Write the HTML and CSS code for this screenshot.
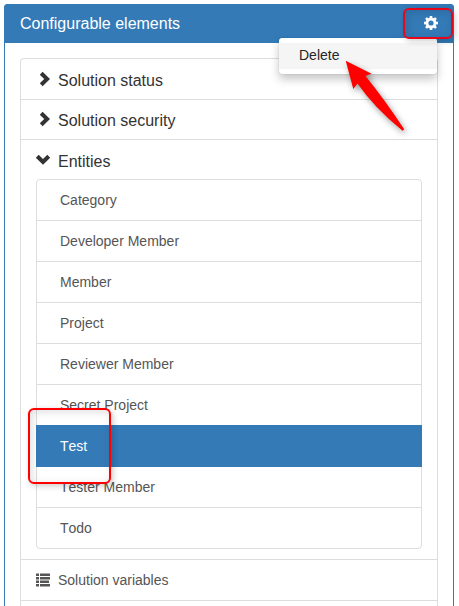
FILE: index.html
```html
<!DOCTYPE html>
<html lang="en">
<head>
<meta charset="utf-8">
<title>Configurable elements</title>
<link rel="stylesheet" href="styles.css">
</head>
<body>
<section class="panel">
  <header class="panel-head">
    <h1 class="panel-title">Configurable elements</h1>
    <svg class="gear" viewBox="0 0 14 14"><path fill="currentColor" fill-rule="evenodd" d="M5.8 0h2.4l.4 1.9 1 .4 1.6-1.1 1.6 1.6-1.1 1.6.4 1 1.9.4v2.4l-1.9.4-.4 1 1.1 1.6-1.6 1.6-1.6-1.1-1 .4-.4 1.9H5.800l-.4-1.9-1-.4-1.600 1.100-1.600-1.600 1.100-1.600-.4-1L0 8.200V5.800l1.900-.4.4-1-1.100-1.600 1.600-1.600 1.600 1.100 1-.4zM7 4.400a2.600 2.600 0 1 0 0 5.200 2.600 2.600 0 0 0 0-5.200z"/></svg>
    <div class="menu"><a class="menu-item">Delete</a></div>
    <div class="mark mark-gear"></div>
  </header>
  <div class="panel-body">
    <ul class="groups">
      <li class="group">
        <svg class="icon" viewBox="0 0 14 14"><path fill="currentColor" d="M3.800 2.700 6.600-.2 14 7l-7.400 7.200L3.800 11.300 8.200 7z"/></svg>
        <span>Solution status</span>
      </li>
      <li class="group">
        <svg class="icon" viewBox="0 0 14 14"><path fill="currentColor" d="M3.800 2.700 6.600-.2 14 7l-7.400 7.200L3.800 11.300 8.200 7z"/></svg>
        <span>Solution security</span>
      </li>
      <li class="group group-open">
        <div class="group-head">
          <svg class="icon" viewBox="0 0 14 14"><path fill="currentColor" d="M-.2 4.700 2.700 1.800 7 6l4.300-4.200 2.900 2.900L7 11.800z"/></svg>
          <span>Entities</span>
        </div>
        <ul class="entities">
          <li class="entity">Category</li>
          <li class="entity">Developer Member</li>
          <li class="entity">Member</li>
          <li class="entity">Project</li>
          <li class="entity">Reviewer Member</li>
          <li class="entity">Secret Project</li>
          <li class="entity active">Test<div class="mark mark-test"></div></li>
          <li class="entity">Tester Member</li>
          <li class="entity">Todo</li>
        </ul>
      </li>
      <li class="group variables">
        <svg class="icon" viewBox="0 0 14 14"><path fill="currentColor" d="M0 .5h3v2.500H0zM4 .5h10v2.500H4zM0 4h3v2.500H0zM4 4h10v2.500H4zM0 7.500h3V10H0zM4 7.500h9V10H4zM0 11h3v2.500H0zM4 11h10v2.500H4z"/></svg>
        <span>Solution variables</span>
      </li>
      <li class="group"></li>
    </ul>
  </div>
</section>
<svg class="arrow" viewBox="0 0 58 70"><path fill="#f00" d="M-.3-.3 25.600 12.800 19.500 15Q39 39 58.200 68.300L56.500 69.700Q28 46.500 11.500 22.500L7.300 28z"/></svg>
</body>
</html>
```
FILE: styles.css
```css
* { box-sizing: border-box; }

body {
  margin: 0;
  padding: 4px 4px 0;
  height: 606px;
  overflow: hidden;
  background: #fff;
  color: #333;
  font: 16px/20px "Liberation Sans", Arial, sans-serif;
  font-kerning: none;
}

ul { list-style: none; margin: 0; padding: 0; }

.panel {
  width: 450px;
  height: 602px;
  border: 1px solid #337ab7;
  border-bottom: 0;
  border-radius: 4px 4px 0 0;
}

.panel-head {
  position: relative;
  display: flex;
  align-items: center;
  justify-content: space-between;
  height: 39px;
  margin: -1px -1px 0;
  padding: 0 16px;
  border-radius: 4px 4px 0 0;
  background: #337ab7;
  color: #fff;
}

.panel-title { margin: 0; font-size: 16px; font-weight: 400; }

.gear { width: 14px; height: 14px; margin-top: -1px; }

.menu {
  position: absolute;
  z-index: 2;
  top: 34px;
  right: 17px;
  width: 158px;
  padding: 5px 0;
  border-radius: 3px;
  background: #fff;
  box-shadow: 0 5px 10px rgba(0, 0, 0, .23), 0 0 1px rgba(0, 0, 0, .3);
}

.menu-item {
  display: block;
  height: 26px;
  padding-left: 20px;
  background: #f5f5f5;
  color: #262626;
  font-size: 14px;
  line-height: 25px;
}

.panel-body { padding: 15px 15px 0; }

.groups {
  height: 548px;
  overflow: hidden;
  border: 1px solid #ddd;
  border-bottom: 0;
  border-radius: 4px 4px 0 0;
}

.group {
  display: flex;
  align-items: center;
  gap: 8px;
  height: 40px;
  padding: 3px 15px 0;
}

.group + .group { border-top: 1px solid #ddd; }

.group .icon {
  flex: none;
  width: 14px;
  height: 14px;
  margin-top: -4px;
  overflow: visible;
}

.group-open { display: block; height: 420px; padding-top: 12px; }

.group-head { display: flex; align-items: center; gap: 8px; height: 20px; }

.entities {
  margin-top: 7px;
  border: 1px solid #ddd;
  border-radius: 4px;
  color: #555;
  font-size: 14px;
}

.entity {
  position: relative;
  height: 41px;
  padding-left: 23px;
  line-height: 40px;
}

.entity + .entity { border-top: 1px solid #ddd; }
.entity:first-child { height: 40px; }

.entity.active {
  height: 42px;
  margin: 0 -1px -1px;
  padding-left: 24px;
  border-color: #337ab7;
  background: #337ab7;
  color: #fff;
}

.entity.active + .entity { border-top-color: transparent; }

.group.variables {
  height: 41px;
  padding-top: 0;
  color: #555;
  font-size: 14px;
}

.group.variables .icon { margin-top: -1px; }

.mark {
  position: absolute;
  z-index: 3;
  border: 2px solid #f00;
  border-radius: 6px;
  box-shadow: 2px 2px 6px rgba(0, 0, 0, .2), inset 2px 2px 8px rgba(0, 0, 0, .13);
}

.mark-gear { top: 4px; left: 399px; width: 50px; height: 31px; border-color: #e8061a; }

.mark-test { top: -18px; left: -8px; width: 83px; height: 76px; }

.arrow {
  position: absolute;
  z-index: 4;
  top: 61px;
  left: 346px;
  width: 58px;
  height: 70px;
  overflow: visible;
  filter: drop-shadow(2px 3px 3px rgba(0, 0, 0, .4));
}
```
